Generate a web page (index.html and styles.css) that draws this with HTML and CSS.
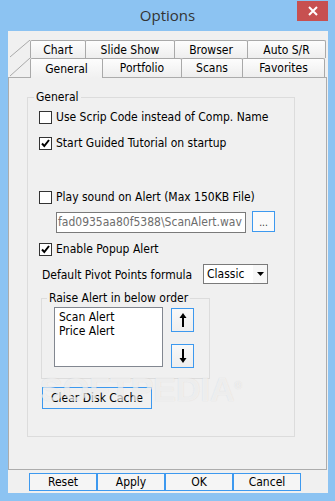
FILE: index.html
```html
<!DOCTYPE html>
<html lang="en">
<head>
    <meta charset="UTF-8">
    <meta name="viewport" content="width=device-width, initial-scale=1.0">
    <title>Options</title>
    <link rel="stylesheet" href="styles.css">
</head>
<body>

    <div class="window">
        <div class="titlebar">
            <span></span>
            <span class="title">Options</span>
            <button class="close" type="button">
                <svg width="10" height="10" viewBox="0 0 10 10"><path d="M1 1 L9 9 M9 1 L1 9" stroke="#fff" stroke-width="2"/></svg>
            </button>
        </div>

        <div class="client">
            <!-- Two rows of tabs, the selected row sits in front -->
            <div class="tab-row">
                <svg class="slant" width="22" height="18"><line x1="2" y1="17" x2="22" y2="0" stroke="#a9a9a9"/></svg>
                <span class="tab tab-chart">Chart</span>
                <span class="tab tab-slide">Slide Show</span>
                <span class="tab tab-browser">Browser</span>
                <span class="tab tab-auto">Auto S/R</span>
            </div>
            <div class="tab-row front">
                <svg class="slant" width="22" height="19"><line x1="2" y1="18" x2="22" y2="0" stroke="#a9a9a9"/></svg>
                <span class="tab tab-general selected">General</span>
                <span class="tab tab-portfolio">Portfolio</span>
                <span class="tab tab-scans">Scans</span>
                <span class="tab tab-favorites">Favorites</span>
            </div>

            <div class="page">
                <fieldset class="group">
                    <legend>General</legend>
                    <div class="group-body">
                        <label class="check row-scrip"><span class="box"></span>Use Scrip Code instead of Comp. Name</label>
                        <label class="check row-tutorial"><span class="box checked"><svg width="11" height="11" viewBox="0 0 11 11"><path d="M2 5.5 L4.3 8 L9 2" fill="none" stroke="#000" stroke-width="2"/></svg></span>Start Guided Tutorial on startup</label>
                        <label class="check row-sound"><span class="box"></span>Play sound on Alert (Max 150KB File)</label>

                        <div class="file-row">
                            <div class="file-input">fad0935aa80f5388\ScanAlert.wav</div>
                            <button class="btn browse" type="button">...</button>
                        </div>

                        <label class="check row-popup"><span class="box checked"><svg width="11" height="11" viewBox="0 0 11 11"><path d="M2 5.5 L4.3 8 L9 2" fill="none" stroke="#000" stroke-width="2"/></svg></span>Enable Popup Alert</label>

                        <div class="pivot-row">
                            <span class="pivot-label">Default Pivot Points formula</span>
                            <div class="select">
                                <span class="select-value">Classic</span>
                                <span class="select-arrow"><svg width="7" height="4"><path d="M0 0 H7 L3.5 4 Z" fill="#000"/></svg></span>
                            </div>
                        </div>

                        <fieldset class="group order-group">
                            <legend>Raise Alert in below order</legend>
                            <div class="order-body">
                                <ul class="listbox">
                                    <li>Scan Alert</li>
                                    <li>Price Alert</li>
                                </ul>
                                <div class="order-buttons">
                                    <button class="btn arrow" type="button">
                                        <svg width="8" height="14" viewBox="0 0 8 14"><path d="M4 0 L7.5 5 H0.5 Z" fill="#000"/><rect x="3" y="3" width="2" height="11" fill="#000"/></svg>
                                    </button>
                                    <button class="btn arrow" type="button">
                                        <svg width="8" height="14" viewBox="0 0 8 14"><path d="M4 14 L7.5 9 H0.5 Z" fill="#000"/><rect x="3" y="0" width="2" height="11" fill="#000"/></svg>
                                    </button>
                                </div>
                            </div>
                        </fieldset>

                        <button class="btn clear-cache" type="button">Clear Disk Cache</button>
                    </div>
                </fieldset>

                <div class="watermark">SOFTPEDIA<sup>®</sup></div>
            </div>

            <div class="actions">
                <button class="btn action" type="button">Reset</button>
                <button class="btn action" type="button">Apply</button>
                <button class="btn action" type="button">OK</button>
                <button class="btn action" type="button">Cancel</button>
            </div>
        </div>
    </div>

</body>
</html>
```

FILE: styles.css
```css
* {
    box-sizing: border-box;
}
body {
    margin: 0;
    background-color: #8cc3f2; /* window frame blue */
    font-family: "DejaVu Sans Condensed", "DejaVu Sans", sans-serif;
    font-stretch: condensed;
    font-size: 12px;
    color: #000;
}
button {
    font: inherit;
    color: inherit;
    padding: 0;
    cursor: pointer;
}
.window {
    width: 335px;
    height: 501px;
    display: flex;
    flex-direction: column;
}

/* Title bar */
.titlebar {
    height: 31px;
    flex: none;
    display: grid;
    grid-template-columns: 1fr auto 1fr;
}
.title {
    font-family: "Open Sans", sans-serif;
    font-stretch: normal;
    font-size: 15px;
    line-height: 30px;
    color: #333;
}
.close {
    justify-self: end;
    margin: 1px 7px 0 0;
    width: 31px;
    height: 20px;
    border: none;
    background-color: #c75050;
    display: flex;
    align-items: center;
    justify-content: center;
}

/* Client area */
.client {
    flex: none;
    height: 462px;
    margin: 0 7px 0 8px;
    padding-top: 9px;
    background-color: #f0f0f0;
    display: flex;
    flex-direction: column;
}

/* Tabs */
.tab-row {
    display: flex;
    height: 18px;
    flex: none;
}
.tab-row.front {
    height: 19px;
}
.slant {
    flex: none;
}
.tab {
    flex: none;
    margin-left: -1px;
    border: 1px solid #a9a9a9;
    border-bottom: none;
    border-radius: 2px 2px 0 0;
    background: linear-gradient(#fdfdfd, #eeeeee);
    display: flex;
    align-items: center;
    justify-content: center;
    line-height: 14px;
}
.tab-chart, .tab-general {
    margin-left: 0;
}
.tab-chart { width: 56px; }
.tab-slide { width: 90px; }
.tab-browser { width: 74px; }
.tab-auto { width: 79px; }
.tab-general { width: 73px; }
.tab-portfolio { width: 80px; }
.tab-scans { width: 62px; }
.tab-favorites { width: 83px; }
.tab.selected {
    position: relative;
    z-index: 1;
    height: 20px;
    background: linear-gradient(#fdfdfd, #f0f0f0);
}

/* Tab page */
.page {
    position: relative;
    flex: none;
    height: 393px;
    margin-right: 1px;
    border: 1px solid #acacac;
    background-color: #f0f0f0;
}
.group {
    margin: 12px 0 0 18px;
    padding: 0;
    width: 268px;
    height: 347px;
    min-width: 0;
    border: 1px solid #dcdcdc;
}
.group legend {
    padding: 0 2px;
    margin-left: 6px;
    line-height: 15px;
}
.group-body {
    padding-left: 11px;
    display: flex;
    flex-direction: column;
    align-items: flex-start;
}

/* Checkboxes */
.check {
    display: flex;
    align-items: center;
    gap: 4px;
    height: 13px;
    line-height: 13px;
    white-space: nowrap;
}
.box {
    width: 13px;
    height: 13px;
    flex: none;
    border: 1px solid #333;
    background-color: #fff;
    display: flex;
    align-items: center;
    justify-content: center;
}
.row-scrip { margin-top: 6px; }
.row-tutorial { margin-top: 13px; }
.row-sound { margin-top: 41px; }
.row-popup { margin-top: 10px; }

/* Sound file */
.file-row {
    margin-top: 7px;
    height: 22px;
    display: flex;
    gap: 6px;
}
.file-input {
    margin: 1px 0 0 17px;
    width: 190px;
    height: 21px;
    border: 1px solid #7a7a7a;
    background-color: #fff;
    color: #6d6d6d;
    padding-left: 1px;
    line-height: 19px;
    white-space: nowrap;
    overflow: hidden;
}
.btn {
    border: 1px solid #3d99ef; /* focused blue */
    background: linear-gradient(#f8f8f8, #eeeeee);
}
.browse {
    width: 23px;
    height: 21px;
    background: #fafafa;
    font-size: 10px;
    line-height: 21px;
    color: #333;
}

/* Pivot formula */
.pivot-row {
    margin: 8px 0 0 3px;
    height: 20px;
    display: flex;
    align-items: center;
}
.pivot-label {
    width: 161px;
    padding-top: 2px;
    white-space: nowrap;
}
.select {
    width: 65px;
    height: 20px;
    border: 1px solid #7a7a7a;
    background-color: #fff;
    display: flex;
    align-items: center;
    justify-content: space-between;
}
.select-value {
    padding-left: 3px;
}
.select-arrow {
    width: 14px;
    height: 18px;
    display: flex;
    align-items: center;
    justify-content: center;
    background-color: #f7f7f7;
}

/* Alert order */
.group.order-group {
    margin: 7px 0 0 2px;
    width: 169px;
    height: 88px;
}
.order-group legend {
    margin-left: 5px;
}
.order-body {
    margin-top: 1px;
    padding-left: 12px;
    display: flex;
    gap: 8px;
}
.listbox {
    list-style-type: none;
    margin: 0;
    padding: 2px 0 0 4px;
    width: 109px;
    height: 60px;
    border: 1px solid #828790;
    background-color: #fff;
    line-height: 14px;
}
.order-buttons {
    margin-top: 1px;
    display: flex;
    flex-direction: column;
    gap: 12px;
}
.arrow {
    width: 23px;
    height: 24px;
    display: flex;
    align-items: center;
    justify-content: center;
}
.clear-cache {
    margin: 8px 0 0 3px;
    width: 110px;
    height: 22px;
    background: #f0f0f0;
}

/* Site watermark laid over the dialog */
.watermark {
    position: absolute;
    left: 31px;
    top: 294px;
    font-family: "Liberation Sans Narrow", "Liberation Sans", sans-serif;
    font-stretch: normal;
    font-weight: bold;
    font-size: 34px;
    line-height: 1;
    color: rgba(255, 255, 255, 0.6);
    text-shadow: 0 0 1px rgba(150, 150, 150, 0.3);
    pointer-events: none;
}
.watermark sup {
    font-size: 10px;
}

/* Bottom buttons */
.actions {
    margin-top: 3px;
    padding-left: 21px;
    display: flex;
}
.action {
    width: 68px;
    height: 18px;
    background: #f5f5f5;
    line-height: 16px;
}
```
